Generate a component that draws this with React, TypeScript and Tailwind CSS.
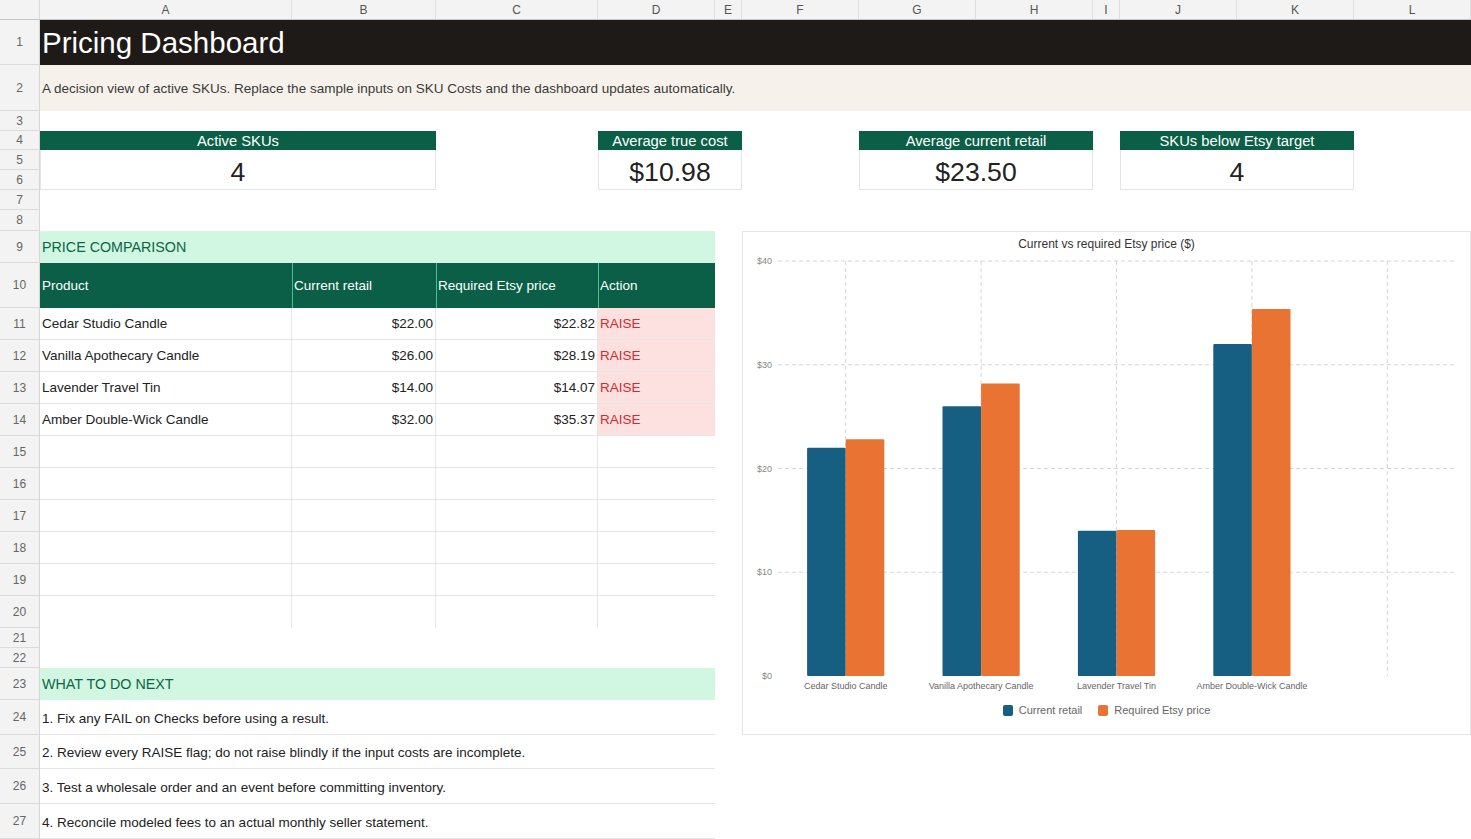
const font = "font-['Liberation_Sans',Arial,sans-serif]";

const columns = [
    { label: "A", w: "w-[252px]" },
    { label: "B", w: "w-[144px]" },
    { label: "C", w: "w-[162px]" },
    { label: "D", w: "w-[117px]" },
    { label: "E", w: "w-[27px]" },
    { label: "F", w: "w-[117px]" },
    { label: "G", w: "w-[117px]" },
    { label: "H", w: "w-[117px]" },
    { label: "I", w: "w-[27px]" },
    { label: "J", w: "w-[117px]" },
    { label: "K", w: "w-[117px]" },
    { label: "L", w: "w-[117px]" },
];

const rowHeights = [
    "h-[45px]", "h-[46px]", "h-[20px]", "h-[19px]", "h-[20px]", "h-[20px]", "h-[20px]",
    "h-[21px]", "h-[32px]", "h-[45px]", "h-[32px]", "h-[32px]", "h-[32px]", "h-[32px]",
    "h-[32px]", "h-[32px]", "h-[32px]", "h-[32px]", "h-[32px]", "h-[32px]", "h-[20px]",
    "h-[20px]", "h-[32px]", "h-[35px]", "h-[34px]", "h-[35px]", "h-[35px]",
];

const products = [
    { name: "Cedar Studio Candle", retail: 22, required: 22.82 },
    { name: "Vanilla Apothecary Candle", retail: 26, required: 28.19 },
    { name: "Lavender Travel Tin", retail: 14, required: 14.07 },
    { name: "Amber Double-Wick Candle", retail: 32, required: 35.37 },
];

const nextSteps = [
    "1. Fix any FAIL on Checks before using a result.",
    "2. Review every RAISE flag; do not raise blindly if the input costs are incomplete.",
    "3. Test a wholesale order and an event before committing inventory.",
    "4. Reconcile modeled fees to an actual monthly seller statement.",
];

const money = (n: number) => "$" + n.toFixed(2);

function Kpi({ title, value, place }: { title: string; value: string; place: string }) {
    return (
        <div className={`${place} flex flex-col`}>
            <div className="h-[19px] bg-[#0a5f46] text-white text-[14.75px] leading-none flex items-center justify-center pt-[2px]">
                {title}
            </div>
            <div className="flex-1 border-x border-b border-[#e4e4e4] flex items-center justify-center text-[26.6px] text-[#222] leading-none pt-[6px]">
                {value}
            </div>
        </div>
    );
}

function Chart() {
    // plot coords inside the svg
    const left = 35;
    const right = 712;
    const zero = 422;
    const unit = 10.375;
    const band = (right - left) / 5;
    const barW = 38.6;
    const y = (v: number) => zero - v * unit;

    return (
        <div className="col-[6/13] row-[9/25] border border-[#e4e4e4] flex flex-col">
            <div className="h-[22px] flex items-center justify-center text-[12px] text-[#333] pt-[2px]">
                Current vs required Etsy price ($)
            </div>
            <svg width={727} height={442} className="block">
                {[40, 30, 20, 10].map((v) => (
                    <line key={v} x1={left} x2={right} y1={y(v)} y2={y(v)} stroke="#d6d6d6" strokeDasharray="4 3" />
                ))}
                {[0, 1, 2, 3, 4].map((i) => (
                    <line
                        key={i}
                        x1={left + band * (i + 0.5)}
                        x2={left + band * (i + 0.5)}
                        y1={y(40)}
                        y2={zero}
                        stroke="#d6d6d6"
                        strokeDasharray="4 3"
                    />
                ))}
                {[40, 30, 20, 10, 0].map((v) => (
                    <text key={v} x={29} y={y(v) + 3} textAnchor="end" fontSize={9} fill="#888" fontFamily="Liberation Sans, Arial, sans-serif">
                        ${v}
                    </text>
                ))}
                {products.map((p, i) => {
                    const c = left + band * (i + 0.5);
                    return (
                        <g key={p.name}>
                            <rect x={c - barW} y={y(p.retail)} width={barW} height={p.retail * unit} fill="#175f82" rx={1} />
                            <rect x={c} y={y(p.required)} width={barW} height={p.required * unit} fill="#e87333" rx={1} />
                            <text x={c} y={zero + 13} textAnchor="middle" fontSize={9} fill="#666" fontFamily="Liberation Sans, Arial, sans-serif">
                                {p.name}
                            </text>
                        </g>
                    );
                })}
            </svg>
            <div className="h-[28px] flex items-center justify-center text-[11px] text-[#666]">
                <span className="w-[10px] h-[11px] rounded-[2px] bg-[#175f82] mr-[6px]" />
                <span>Current retail</span>
                <span className="w-[10px] h-[11px] rounded-[2px] bg-[#e87333] ml-[16px] mr-[6px]" />
                <span>Required Etsy price</span>
            </div>
        </div>
    );
}

export default function App() {
    return (
        <div className={`${font} w-[1471px] h-[839px] overflow-hidden bg-white text-[#222]`}>
            {/* column letters */}
            <div className="flex h-[20px] bg-[#f3f3f3] border-b border-[#c6c6c6]">
                <div className="w-[40px] border-r border-[#dadada]" />
                {columns.map((c) => (
                    <div key={c.label} className={`${c.w} border-r border-[#dedede] flex items-center justify-center text-[12px] text-[#555]`}>
                        {c.label}
                    </div>
                ))}
            </div>

            <div className="flex">
                {/* row numbers */}
                <div className="w-[40px] flex flex-col bg-[#f3f3f3] border-r border-[#d6d6d6]">
                    {rowHeights.map((h, i) => (
                        <div key={i} className={`${h} border-b border-[#dcdcdc] flex items-center justify-center text-[12px] text-[#666]`}>
                            {i + 1}
                        </div>
                    ))}
                </div>

                {/* sheet body */}
                <div className="w-[1431px] grid grid-cols-[252px_144px_162px_117px_27px_117px_117px_117px_27px_117px_117px_117px] grid-rows-[45px_46px_20px_19px_20px_20px_20px_21px_32px_45px_32px_32px_32px_32px_32px_32px_32px_32px_32px_32px_20px_20px_32px_35px_34px_35px_35px]">
                    <div className="col-[1/13] row-[1/2] bg-[#1e1a17] text-white text-[29.5px] flex items-center pl-[2px] pt-[2px]">
                        Pricing Dashboard
                    </div>
                    <div className="col-[1/13] row-[2/3] bg-[#f6f2eb] text-[13.5px] text-[#3a3a3a] flex items-center pl-[2px] pt-[2px]">
                        A decision view of active SKUs. Replace the sample inputs on SKU Costs and the dashboard updates automatically.
                    </div>

                    <Kpi place="col-[1/3] row-[4/7]" title="Active SKUs" value="4" />
                    <Kpi place="col-[4/6] row-[4/7]" title="Average true cost" value="$10.98" />
                    <Kpi place="col-[7/9] row-[4/7]" title="Average current retail" value="$23.50" />
                    <Kpi place="col-[10/12] row-[4/7]" title="SKUs below Etsy target" value="4" />

                    <div className="col-[1/5] row-[9/10] bg-[#d1f7e2] text-[#0b6647] text-[14.3px] flex items-center pl-[2px] pt-[1px]">
                        PRICE COMPARISON
                    </div>

                    <div className="col-[1/5] row-[10/21] grid grid-cols-[252px_144px_162px_117px] grid-rows-[45px_repeat(10,32px)] text-[13.5px]">
                        <div className="bg-[#0a5f46] text-white flex items-center pl-[2px] pt-[2px]">Product</div>
                        <div className="bg-[#0a5f46] text-white flex items-center pl-[1px] pt-[2px] border-l border-[#4cbd90]">Current retail</div>
                        <div className="bg-[#0a5f46] text-white flex items-center pl-[1px] pt-[2px] border-l border-[#4cbd90]">Required Etsy price</div>
                        <div className="bg-[#0a5f46] text-white flex items-center pl-[1px] pt-[2px] border-l border-[#4cbd90]">Action</div>
                        {Array.from({ length: 10 }).map((_, i) => {
                            const p = products[i];
                            const line = i < 9 ? "border-b border-[#e6e6e6]" : "";
                            return [
                                <div key={`a${i}`} className={`${line} border-r border-[#e6e6e6] flex items-center pl-[2px] pt-[2px]`}>
                                    {p?.name}
                                </div>,
                                <div key={`b${i}`} className={`${line} border-r border-[#e6e6e6] flex items-center justify-end pr-[2px] pt-[2px]`}>
                                    {p ? money(p.retail) : ""}
                                </div>,
                                <div key={`c${i}`} className={`${line} border-r border-[#e6e6e6] flex items-center justify-end pr-[2px] pt-[2px]`}>
                                    {p ? money(p.required) : ""}
                                </div>,
                                <div key={`d${i}`} className={`${line} ${p ? "bg-[#fde0e0] text-[#d42b2b]" : ""} flex items-center pl-[2px] pt-[2px]`}>
                                    {p ? "RAISE" : ""}
                                </div>,
                            ];
                        })}
                    </div>

                    <Chart />

                    <div className="col-[1/5] row-[23/24] bg-[#d1f7e2] text-[#0b6647] text-[14.3px] flex items-center pl-[2px] pt-[2px]">
                        WHAT TO DO NEXT
                    </div>
                    <div className="col-[1/5] row-[24/28] flex flex-col text-[13.5px]">
                        {nextSteps.map((s, i) => (
                            <div
                                key={s}
                                className={`${i === 1 ? "h-[34px]" : "h-[35px]"} border-b border-[#e6e6e6] flex items-center pl-[2px] pt-[4px]`}
                            >
                                {s}
                            </div>
                        ))}
                    </div>
                </div>
            </div>
        </div>
    );
}
